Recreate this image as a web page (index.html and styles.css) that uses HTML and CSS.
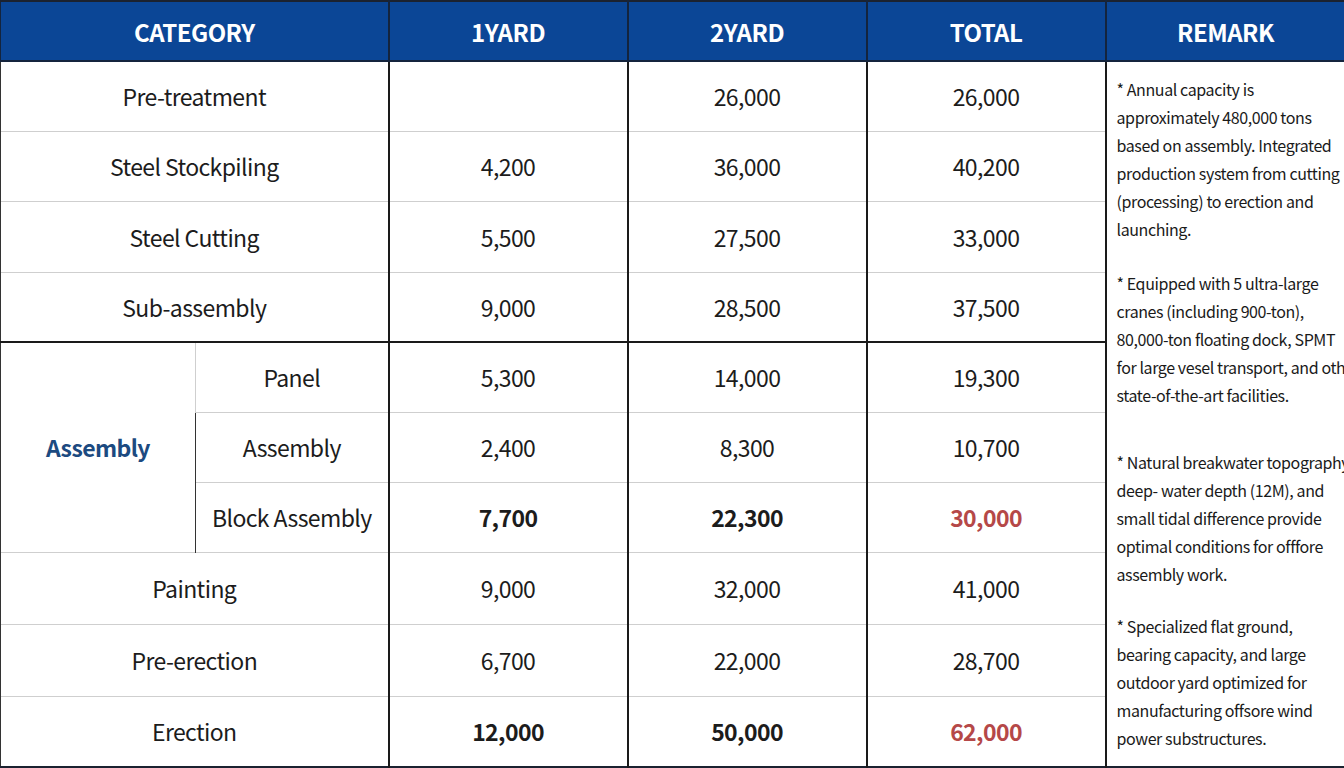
FILE: index.html
```html
<!DOCTYPE html>
<html>
<head>
<meta charset="utf-8">
<link rel="stylesheet" href="styles.css">
</head>
<body>
<table class="cap">
  <colgroup>
    <col class="c-a"><col class="c-b"><col class="c-n"><col class="c-n"><col class="c-n"><col class="c-r">
  </colgroup>
  <thead>
    <tr class="head">
      <th colspan="2">CATEGORY</th>
      <th>1YARD</th>
      <th>2YARD</th>
      <th>TOTAL</th>
      <th>REMARK</th>
    </tr>
  </thead>
  <tbody>
    <tr class="r1">
      <td colspan="2">Pre-treatment</td>
      <td></td>
      <td>26,000</td>
      <td>26,000</td>
      <td rowspan="10" class="remark">
        <p class="p1">* Annual capacity is<br>approximately 480,000 tons<br>based on assembly. Integrated<br>production system from cutting<br>(processing) to erection and<br>launching.</p>
        <p class="p2">* Equipped with 5 ultra-large<br>cranes (including 900-ton),<br>80,000-ton floating dock, SPMT<br>for large vesel transport, and other<br>state-of-the-art facilities.</p>
        <p class="p3">* Natural breakwater topography,<br>deep- water depth (12M), and<br>small tidal difference provide<br>optimal conditions for offfore<br>assembly work.</p>
        <p class="p4">* Specialized flat ground,<br>bearing capacity, and large<br>outdoor yard optimized for<br>manufacturing offsore wind<br>power substructures.</p>
      </td>
    </tr>
    <tr class="r2">
      <td colspan="2">Steel Stockpiling</td>
      <td>4,200</td>
      <td>36,000</td>
      <td>40,200</td>
    </tr>
    <tr class="r3">
      <td colspan="2">Steel Cutting</td>
      <td>5,500</td>
      <td>27,500</td>
      <td>33,000</td>
    </tr>
    <tr class="r4 pre-group">
      <td colspan="2">Sub-assembly</td>
      <td>9,000</td>
      <td>28,500</td>
      <td>37,500</td>
    </tr>
    <tr class="r5 group-first">
      <td rowspan="3" class="group">Assembly</td>
      <td class="sub">Panel</td>
      <td>5,300</td>
      <td>14,000</td>
      <td>19,300</td>
    </tr>
    <tr class="r6">
      <td class="sub">Assembly</td>
      <td>2,400</td>
      <td>8,300</td>
      <td>10,700</td>
    </tr>
    <tr class="r7">
      <td class="sub">Block Assembly</td>
      <td class="strong">7,700</td>
      <td class="strong">22,300</td>
      <td class="strong red">30,000</td>
    </tr>
    <tr class="r8">
      <td colspan="2">Painting</td>
      <td>9,000</td>
      <td>32,000</td>
      <td>41,000</td>
    </tr>
    <tr class="r9">
      <td colspan="2">Pre-erection</td>
      <td>6,700</td>
      <td>22,000</td>
      <td>28,700</td>
    </tr>
    <tr class="r10">
      <td colspan="2">Erection</td>
      <td class="strong">12,000</td>
      <td class="strong">50,000</td>
      <td class="strong red">62,000</td>
    </tr>
  </tbody>
</table>
</body>
</html>
```

FILE: styles.css
```css
html, body {
  margin: 0;
  padding: 0;
  background: #ffffff;
}

body {
  width: 1344px;
  height: 768px;
  overflow: hidden;
  font-family: "Noto Sans CJK KR", "Noto Sans", sans-serif;
  color: #1c1c1c;
}

.cap {
  width: 1344px;
  table-layout: fixed;
  border-collapse: collapse;
  border-top: 2px solid #1b2230;
  border-bottom: 2px solid #1b2230;
}

.c-a { width: 195px; }
.c-b { width: 193px; }
.c-n { width: 239px; }
.c-r { width: 239px; }

.head th {
  height: 58px;
  padding: 0;
  background: #0b4696;
  color: #ffffff;
  font-weight: 700;
  font-size: 24px;
  letter-spacing: -0.5px;
  text-align: center;
  vertical-align: middle;
  border-left: 2px solid #14243d;
  border-bottom: 2px solid #14243d;
}

.head th:first-child { border-left: 1px solid #14243d; }

td {
  padding: 0;
  text-align: center;
  vertical-align: middle;
  font-size: 23px;
  letter-spacing: -0.6px;
  border-left: 2px solid #1a1a1a;
  border-top: 1.5px solid #cfcfcf;
}

tbody tr:first-child td { border-top: none; }

td:first-child { border-left: 1px solid #333; }

.r1 { height: 70px; }
.r2 { height: 70px; }
.r3 { height: 71px; }
.r4 { height: 70px; }
.r5 { height: 70px; }
.r6 { height: 70px; }
.r7 { height: 70px; }
.r8 { height: 72px; }
.r9 { height: 72px; }
.r10 { height: 71px; }

.group-first td { border-top: 2px solid #1a1a1a; }

.group {
  color: #1c4a80;
  font-weight: 700;
}

.sub {
  border-left: 1.5px solid #cfcfcf;
}

.strong { font-weight: 700; }

.red { color: #b54848; }

.remark {
  text-align: left;
  vertical-align: top;
  border-top: none;
  border-left: 2px solid #1a1a1a;
  padding: 13px 0 0 10px;
  font-size: 16px;
  line-height: 28px;
  letter-spacing: -0.4px;
  white-space: nowrap;
  overflow: hidden;
  color: #1a1a1a;
}

.remark p { margin: 0; }
.remark .p2 { margin-top: 26px; }
.remark .p3 { margin-top: 39px; }
.remark .p4 { margin-top: 24px; }
```
